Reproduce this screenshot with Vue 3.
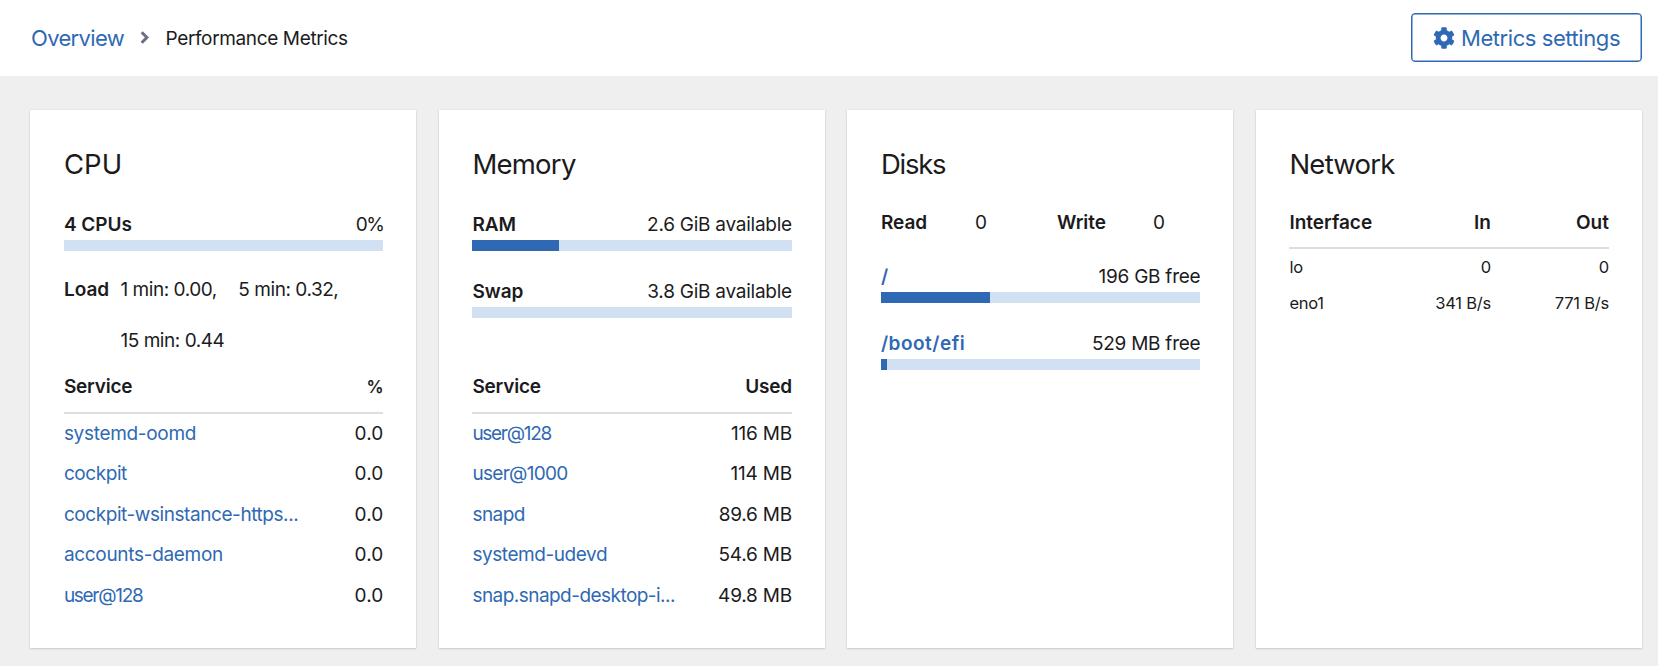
<script setup>
const cpuServices = [
  ['systemd-oomd', '0.0', 'normal'],
  ['cockpit', '0.0', 'snug'],
  ['cockpit-wsinstance-https...', '0.0', 'snug'],
  ['accounts-daemon', '0.0', 'normal'],
  ['user@128', '0.0', 'tightest'],
]
const memServices = [
  ['user@128', '116 MB', 'tightest'],
  ['user@1000', '114 MB', 'tighter'],
  ['snapd', '89.6 MB', 'tight'],
  ['systemd-udevd', '54.6 MB', 'snug'],
  ['snap.snapd-desktop-i...', '49.8 MB', 'tight'],
]
const memory = [
  { name: 'RAM', note: '2.6 GiB available', used: 27.2 },
  { name: 'Swap', note: '3.8 GiB available', used: 0 },
]
const disks = [
  { name: '/', note: '196 GB free', used: 34.1 },
  { name: '/boot/efi', note: '529 MB free', used: 2 },
]
const interfaces = [
  ['lo', '0', '0'],
  ['eno1', '341 B/s', '771 B/s'],
]
</script>

<template>
  <div class="page">
    <header class="top">
      <nav class="crumbs">
        <a class="link overview">Overview</a>
        <svg class="chev" viewBox="0 0 8 12"><path d="M1.4 1.2 6.2 6 1.4 10.8" fill="none" stroke="#6a7183" stroke-width="2.8" /></svg>
        <span class="current">Performance Metrics</span>
      </nav>
      <button class="settings">
        <svg class="gear" viewBox="0 0 512 512"><path fill="currentColor" d="M487.4 315.7l-42.600-24.600c4.300-23.200 4.300-47 0-70.200l42.600-24.600c4.900-2.800 7.100-8.600 5.500-14-11.100-35.600-30-67.800-54.700-94.600-3.800-4.100-10-5.100-14.800-2.300L380.800 110c-17.900-15.400-38.500-27.300-60.800-35.100V25.800c0-5.600-3.900-10.500-9.400-11.700-36.700-8.200-74.300-7.800-109.200 0-5.500 1.200-9.400 6.100-9.400 11.700V75c-22.200 7.900-42.800 19.800-60.800 35.100L88.700 85.500c-4.900-2.800-11-1.900-14.800 2.300-24.700 26.700-43.600 58.900-54.700 94.600-1.700 5.400.6 11.200 5.500 14L67.300 221c-4.300 23.200-4.300 47 0 70.200l-42.600 24.600c-4.900 2.800-7.100 8.600-5.500 14 11.100 35.600 30 67.800 54.700 94.600 3.800 4.100 10 5.100 14.800 2.300l42.600-24.600c17.900 15.400 38.500 27.300 60.800 35.100v49.200c0 5.600 3.900 10.500 9.400 11.700 36.700 8.200 74.300 7.800 109.200 0 5.500-1.200 9.400-6.100 9.400-11.700v-49.200c22.200-7.900 42.800-19.800 60.800-35.100l42.600 24.600c4.900 2.800 11 1.900 14.800-2.300 24.700-26.700 43.600-58.900 54.700-94.600 1.500-5.500-.7-11.300-5.600-14.100zM256 336c-44.100 0-80-35.900-80-80s35.900-80 80-80 80 35.900 80 80-35.900 80-80 80z" /></svg>
        <span>Metrics settings</span>
      </button>
    </header>

    <main class="grid">
      <section class="card">
        <h2 class="t-cpu">CPU</h2>
        <div class="meter">
          <div class="line"><b>4 CPUs</b><span class="pct">0%</span></div>
          <div class="bar"></div>
        </div>
        <div class="load">
          <b>Load</b>
          <div class="loads"><span>1 min: 0.00,</span><span>5 min: 0.32,</span><span>15 min: 0.44</span></div>
        </div>
        <div class="thead"><b>Service</b><b class="sign">%</b></div>
        <div v-for="s in cpuServices" :key="s[0]" class="row"><a class="link" :class="s[2]">{{ s[0] }}</a><span class="num">{{ s[1] }}</span></div>
      </section>

      <section class="card">
        <h2 class="t-mem">Memory</h2>
        <div v-for="m in memory" :key="m.name" class="meter">
          <div class="line"><b>{{ m.name }}</b><span>{{ m.note }}</span></div>
          <div class="bar"><div v-if="m.used" class="fill" :style="{ width: m.used + '%' }"></div></div>
        </div>
        <div class="thead mem-head"><b>Service</b><b>Used</b></div>
        <div v-for="s in memServices" :key="s[0]" class="row"><a class="link" :class="s[2]">{{ s[0] }}</a><span class="mb">{{ s[1] }}</span></div>
      </section>

      <section class="card">
        <h2 class="t-disk">Disks</h2>
        <div class="io"><b>Read</b><span>0</span><b>Write</b><span>0</span></div>
        <div v-for="d in disks" :key="d.name" class="meter">
          <div class="line"><b class="link mount">{{ d.name }}</b><span>{{ d.note }}</span></div>
          <div class="bar"><div class="fill" :style="{ width: d.used + '%' }"></div></div>
        </div>
      </section>

      <section class="card">
        <h2 class="t-net">Network</h2>
        <div class="net head"><b>Interface</b><b>In</b><b>Out</b></div>
        <div v-for="n in interfaces" :key="n[0]" class="net small"><span v-for="(c, i) in n" :key="i">{{ c }}</span></div>
      </section>
    </main>
  </div>
</template>

<style>
body { background: #efefef; overflow: hidden; }
</style>

<style scoped>
.page {
  width: 1658px;
  height: 666px;
  box-sizing: border-box;
  overflow: hidden;
  background: #efefef;
  color: #1b1b1d;
  font: 19px/28px Inter, "Liberation Sans", sans-serif;
  white-space: nowrap;
}
.page * { box-sizing: border-box; }
b { font-weight: 600; }
.link { color: #2f69b3; }
.top {
  height: 76px;
  padding: 0 16px 0 31px;
  background: #fff;
  display: flex;
  align-items: center;
  justify-content: space-between;
}
.crumbs { display: flex; align-items: center; }
.overview { font-size: 22px; width: 109px; letter-spacing: -0.67px; }
.chev { width: 9px; height: 13px; margin-top: -1px; }
.current { margin-left: 16.5px; padding-top: 1px; letter-spacing: -0.36px; }
.settings {
  width: 231px;
  height: 49px;
  margin-top: -1px;
  padding: 0 0 0 21px;
  display: flex;
  align-items: center;
  gap: 6px;
  border: 1px solid #2f69b3;
  box-shadow: inset 0 0 0 0.5px #2f69b3;
  border-radius: 4px;
  background: #fff;
  color: #2f69b3;
  font: 22px/28px Inter, "Liberation Sans", sans-serif;
  letter-spacing: -0.43px;
}
.gear { width: 22px; height: 22px; }
.grid {
  display: grid;
  grid-template-columns: repeat(4, 386px);
  gap: 22.5px;
  padding: 34px 16px 0 30.4px;
}
.card {
  height: 538px;
  padding: 36px 33px 0 33.5px;
  background: #fff;
  box-shadow: 0 1px 2px rgba(0, 0, 0, 0.14), 0 0 1px rgba(0, 0, 0, 0.14);
}
h2 { margin: 0 0 29px; font-size: 27.5px; line-height: 36px; font-weight: 400; }
.t-cpu { letter-spacing: 0.1px; }
.t-mem { letter-spacing: -0.75px; }
.t-disk { letter-spacing: -1.25px; }
.t-net { letter-spacing: -0.75px; }
.line { display: flex; justify-content: space-between; height: 28px; }
.line span { letter-spacing: -0.25px; }
.line .pct { letter-spacing: -1.5px; }
.line .mount { letter-spacing: 0.5px; }
.meter { height: 67px; }
.bar { height: 11px; margin-top: 1px; background: #d2e0f4; }
.fill { height: 100%; background: #2f69b3; }
.load { display: flex; margin-top: -2px; height: 97px; }
.load b { width: 56.5px; }
.loads { display: flex; flex-wrap: wrap; width: 240px; column-gap: 21.5px; row-gap: 23px; align-content: flex-start; letter-spacing: -0.45px; }
.thead { display: flex; justify-content: space-between; height: 41px; border-bottom: 2px solid #dedede; letter-spacing: -0.2px; }
.sign { font-size: 17px; }
.mem-head { margin-top: 28px; }
.row { display: flex; justify-content: space-between; line-height: 40.5px; height: 40.4px; }
.normal { letter-spacing: -0.31px; }
.snug { letter-spacing: -0.43px; }
.tight { letter-spacing: -0.54px; }
.tighter { letter-spacing: -0.7px; }
.tightest { letter-spacing: -1.3px; }
.num { letter-spacing: 0.1px; }
.mb { letter-spacing: -0.22px; }
.io { display: grid; grid-template-columns: 94px 82px 96px 1fr; margin-top: -2px; height: 54px; }
.net { display: grid; grid-template-columns: 1fr 90px 118px; }
.net > :not(:first-child) { text-align: right; }
.head { margin-top: -2px; height: 40px; border-bottom: 2px solid #dedede; }
.small { font-size: 16.5px; line-height: 36px; letter-spacing: -0.25px; }
</style>
